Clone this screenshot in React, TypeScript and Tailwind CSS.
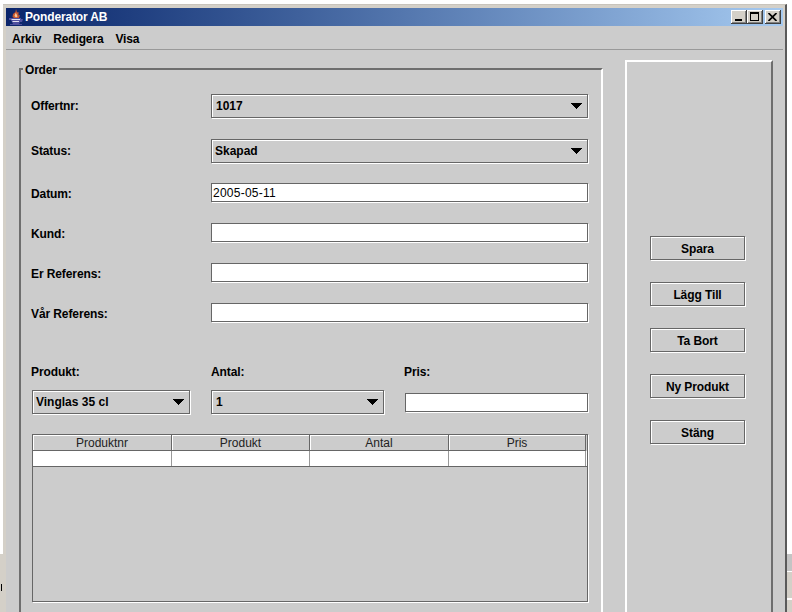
const font = "font-['Liberation_Sans',Arial,sans-serif]";

function Arrow() {
  return (
    <svg width="11" height="6" viewBox="0 0 11 6" className="block shrink-0">
      <path d="M0 0H11V1H10V2H9V3H8V4H7V5H6V6H5V5H4V4H3V3H2V2H1V1H0Z" fill="#000" />
    </svg>
  );
}

function Combo({ value, w, pl = "pl-[4px]" }: { value: string; w: string; pl?: string }) {
  return (
    <div className={`${w} h-[24px] ${pl} pr-[5px] flex items-center justify-between border border-[#666] shadow-[1px_1px_0_#fff,inset_1px_1px_0_#fff] text-[12px] font-bold text-black`}>
      <span>{value}</span>
      <Arrow />
    </div>
  );
}

function Field({ value = "", w = "w-[377px]" }: { value?: string; w?: string }) {
  return (
    <div className={`${w} h-[19px] flex items-center pl-[1px] border border-[#666] shadow-[1px_1px_0_#fff] bg-white text-[12px] leading-[14px] tracking-[0.25px] text-black`}>
      {value}
    </div>
  );
}

function Row({ label, mt, nudge = "pt-[2px]", children }: { label: string; mt: string; nudge?: string; children: React.ReactNode }) {
  return (
    <div className={`flex items-center ${mt}`}>
      <div className={`-ml-px w-[180px] ${nudge} text-[12px] leading-[14px] font-bold tracking-[-0.1px] text-black`}>{label}</div>
      {children}
    </div>
  );
}

function Btn({ label }: { label: string }) {
  return (
    <div className="w-[95px] h-[24px] pt-px flex items-center justify-center border border-[#666] shadow-[1px_1px_0_#fff,inset_1px_1px_0_#fff] text-[12px] font-bold tracking-[-0.1px] text-black">
      {label}
    </div>
  );
}

function WinBtn({ children, ml = "" }: { children: React.ReactNode; ml?: string }) {
  return (
    <div className={`w-[16px] h-[14px] ${ml} bg-[#d4d0c8] border-r border-b border-[#404040] shadow-[inset_1px_1px_0_#fff,inset_-1px_-1px_0_#808080] flex items-center justify-center`}>
      {children}
    </div>
  );
}

function JavaIcon() {
  return (
    <svg width="15" height="16" viewBox="0 0 15 16" className="block shrink-0">
      <path d="M7 0 L6.5 3 L4 5 L3.5 8 L5 9 L10 9 L11 6 L9.5 6.5 L9.5 3 L8 3.5 Z" fill="#c8572f" />
      <path d="M6.5 4 L5.5 7 L7 8.5 L8.5 7.5 L7.5 5 Z" fill="#f4c8a0" />
      <path d="M0 9 H12 V10 H14 L13 13 H11 L10 15 H13 V16 H1 V15 H4 L2 11 H0 Z" fill="#4f4f9e" />
      <path d="M2.5 10.5 H11 M3.5 12.5 H10" stroke="#eeeef8" strokeWidth="0.9" />
    </svg>
  );
}

export default function App() {
  const cols = ["Produktnr", "Produkt", "Antal", "Pris"];
  return (
    <div className={`${font} relative w-[792px] h-[612px] overflow-hidden bg-white`}>
      {/* desktop fragments behind the window edges */}
      <div className="absolute left-0 top-[553px] w-[3px] h-[59px] bg-[#d4d0c8] border-t border-white">
        <div className="mt-[30px] ml-px w-px h-[7px] bg-black" />
      </div>
      <div className="absolute right-0 top-[554px] w-[5px] h-[58px] bg-[#d4d0c8]">
        <div className="h-[18px] bg-[#c4c4c4] border-b border-white" />
        <div className="mt-[26px] h-[2px] bg-white" />
      </div>
      <div className="ml-[3px] translate-y-[4px] w-[784px] h-[608px] overflow-hidden bg-[#d4d0c8] border-t border-[#c8c4bc] border-r-2 border-r-[#5a5a5a] pl-[3px] pt-[3px]">
        {/* title bar */}
        <div className="w-[777px] h-[18px] flex items-center bg-gradient-to-r from-[#0a246a] to-[#a6caf0] pl-[3px] pr-[2px]">
          <JavaIcon />
          <span className="ml-px text-[12px] font-bold tracking-[-0.15px] text-white">Ponderator AB</span>
          <div className="ml-auto flex">
            <WinBtn>
              <div className="w-[7px] h-[2px] bg-black mt-[7px] mr-[1px]" />
            </WinBtn>
            <WinBtn>
              <div className="w-[9px] h-[9px] border border-black border-t-2" />
            </WinBtn>
            <WinBtn ml="ml-[2px]">
              <svg width="9" height="8" viewBox="0 0 9 8">
                <path d="M0.5 0 L8.5 8 M8.5 0 L0.5 8" stroke="#000" strokeWidth="1.7" />
              </svg>
            </WinBtn>
          </div>
        </div>
        {/* content */}
        <div className="w-[779px] h-[600px] bg-[#cccccc]">
          <div className="h-[23px] pt-[2px] flex items-center gap-[12px] pl-[6px] text-[12px] font-bold tracking-[-0.15px] text-black">
            <span>Arkiv</span>
            <span>Redigera</span>
            <span>Visa</span>
          </div>
          <div className="w-[777px] h-px bg-[#999999]" />
          <div className="flex items-start pl-[13px] pt-[10px]">
            {/* Order */}
            <div className="relative mt-[8px] w-[584px] h-[600px] border-l-2 border-t-2 border-[#6e6e6e] border-r-2 border-r-white pl-[11px] pt-[24px]">
              <div className="absolute left-[2px] -top-[7px] bg-[#cccccc] px-[2px] text-[12px] font-bold tracking-[-0.2px] leading-[14px] text-black">Order</div>
              <Row label="Offertnr:" mt="" nudge="">
                <Combo value="1017" w="w-[377px]" />
              </Row>
              <Row label="Status:" mt="mt-[21px]" nudge="">
                <Combo value="Skapad" w="w-[377px]" pl="pl-[3px]" />
              </Row>
              <Row label="Datum:" mt="mt-[20px]">
                <Field value="2005-05-11" />
              </Row>
              <Row label="Kund:" mt="mt-[21px]">
                <Field />
              </Row>
              <Row label="Er Referens:" mt="mt-[21px]">
                <Field />
              </Row>
              <Row label="Vår Referens:" mt="mt-[21px]">
                <Field />
              </Row>
              <div className="-ml-px flex mt-[41px] text-[12px] font-bold tracking-[-0.1px] text-black leading-[18px]">
                <div className="w-[180px]">Produkt:</div>
                <div className="w-[193px]">Antal:</div>
                <div>Pris:</div>
              </div>
              <div className="flex items-center mt-[9px]">
                <Combo value="Vinglas 35 cl" w="w-[158px]" pl="pl-[3px]" />
                <div className="ml-[21px]">
                  <Combo value="1" w="w-[173px]" />
                </div>
                <div className="ml-[21px]">
                  <Field w="w-[183px]" />
                </div>
              </div>
              {/* table */}
              <div className="mt-[20px] w-[556px] h-[168px] border border-[#666] shadow-[1px_1px_0_#fff]">
                <div className="grid grid-cols-[139px_138px_139px_137px] w-[553px] h-[16px] border-b border-[#666]">
                  {cols.map((c) => (
                    <div key={c} className="pt-px flex items-center justify-center border-r border-[#666] shadow-[inset_1px_1px_0_#fff] text-[12px] leading-none text-[#222]">
                      {c}
                    </div>
                  ))}
                </div>
                <div className="grid grid-cols-[139px_138px_139px_137px] w-[554px] h-[16px] bg-white border-b border-[#666]">
                  {cols.map((c) => (
                    <div key={c} className="border-r border-[#999]" />
                  ))}
                </div>
              </div>
            </div>
            {/* Buttons */}
            <div className="ml-[22px] w-[148px] h-[600px] border-l-2 border-t-2 border-white border-r-2 border-r-[#6e6e6e] pl-[23px] pt-[174px] flex flex-col gap-[22px]">
              <Btn label="Spara" />
              <Btn label="Lägg Till" />
              <Btn label="Ta Bort" />
              <Btn label="Ny Produkt" />
              <Btn label="Stäng" />
            </div>
          </div>
        </div>
      </div>
    </div>
  );
}
